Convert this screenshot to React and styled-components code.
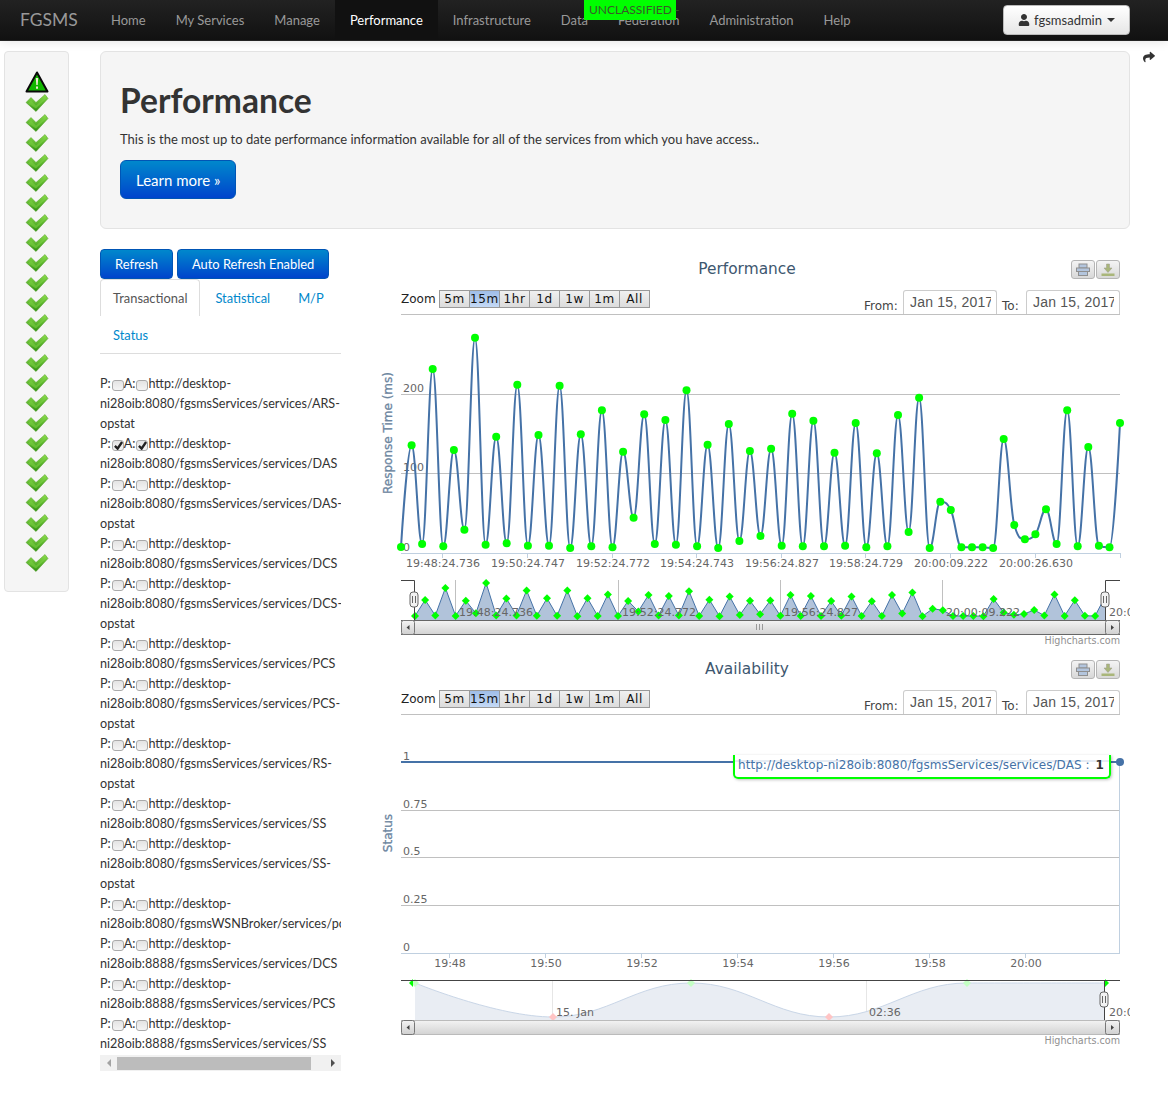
import React from "react";
import styled, { createGlobalStyle } from "styled-components";
import { FaUser, FaShare } from "react-icons/fa";

const GlobalStyle = createGlobalStyle`
  html, body {
    margin: 0;
    padding: 0;
    background: #fff;
  }
  body {
    font-family: Lato, "Noto Sans", sans-serif;
    font-size: 13px;
    line-height: 20px;
    color: #333;
  }
`;

const chartFont = `"DejaVu Sans", Verdana, sans-serif`;

const NAV = ["Home", "My Services", "Manage", "Performance", "Infrastructure", "Data", "Federation", "Administration", "Help"];

const mainY = [
  547, 445.3, 544, 369, 546.3, 450, 529.7, 337.7, 544.7, 436.7, 543.3, 384.7, 545.7, 435, 545.7, 385.7, 548, 434.3, 546.3, 410.3, 547.3, 451.7, 517.7, 414.3, 544, 420, 544.7, 390.3, 546.3, 444.7, 548, 424, 541, 451, 536, 448.7,
  545.7, 413.7, 546.3, 420.7, 546.3, 452.7, 545.7, 423, 547.3, 453.3, 546.3, 415, 532, 397.7, 548, 501.7, 510, 547.3, 547.3, 547.3, 548, 439, 525, 539.3, 534.3, 509.3, 544, 410.3, 546.3, 447, 545.7, 547.3, 423,
];

const services = [
  { url: "http://desktop-ni28oib:8080/fgsmsServices/services/ARS-opstat" },
  { url: "http://desktop-ni28oib:8080/fgsmsServices/services/DAS", on: true },
  { url: "http://desktop-ni28oib:8080/fgsmsServices/services/DAS-opstat" },
  { url: "http://desktop-ni28oib:8080/fgsmsServices/services/DCS" },
  { url: "http://desktop-ni28oib:8080/fgsmsServices/services/DCS-opstat" },
  { url: "http://desktop-ni28oib:8080/fgsmsServices/services/PCS" },
  { url: "http://desktop-ni28oib:8080/fgsmsServices/services/PCS-opstat" },
  { url: "http://desktop-ni28oib:8080/fgsmsServices/services/RS-opstat" },
  { url: "http://desktop-ni28oib:8080/fgsmsServices/services/SS" },
  { url: "http://desktop-ni28oib:8080/fgsmsServices/services/SS-opstat" },
  { url: "http://desktop-ni28oib:8080/fgsmsWSNBroker/services/policyPublisher" },
  { url: "http://desktop-ni28oib:8888/fgsmsServices/services/DCS" },
  { url: "http://desktop-ni28oib:8888/fgsmsServices/services/PCS" },
  { url: "http://desktop-ni28oib:8888/fgsmsServices/services/SS" },
];

// same control point maths as the highcharts spline series
const splinePath = (pts) => {
  let d = `M${pts[0][0]} ${pts[0][1]}`;
  const conts = pts.map(([x, y], i) => {
    if (i === 0 || i === pts.length - 1) return { l: [x, y], r: [x, y] };
    const [px, py] = pts[i - 1];
    const [nx, ny] = pts[i + 1];
    const lx = (1.5 * x + px) / 2.5;
    const rx = (1.5 * x + nx) / 2.5;
    let ly = (1.5 * y + py) / 2.5;
    let ry = (1.5 * y + ny) / 2.5;
    const fix = ((ry - ly) * (rx - x)) / (rx - lx) + y - ry;
    ly += fix;
    ry += fix;
    if (ly > py && ly > y) {
      ly = Math.max(py, y);
      ry = 2 * y - ly;
    } else if (ly < py && ly < y) {
      ly = Math.min(py, y);
      ry = 2 * y - ly;
    }
    if (ry > ny && ry > y) {
      ry = Math.max(ny, y);
      ly = 2 * y - ry;
    } else if (ry < ny && ry < y) {
      ry = Math.min(ny, y);
      ly = 2 * y - ry;
    }
    return { l: [lx, ly], r: [rx, ry] };
  });
  for (let i = 1; i < pts.length; i++) {
    const a = conts[i - 1].r;
    const b = conts[i].l;
    d += ` C${a[0].toFixed(1)} ${a[1].toFixed(1)} ${b[0].toFixed(1)} ${b[1].toFixed(1)} ${pts[i][0]} ${pts[i][1]}`;
  }
  return d;
};

const Page = styled.div`
  width: 1168px;
  height: 1097px;
  overflow: hidden;
  position: relative;
`;

const Navbar = styled.nav`
  height: 41px;
  box-sizing: border-box;
  padding: 0 38px 0 20px;
  display: flex;
  align-items: center;
  background: linear-gradient(#222222, #111111);
  border-bottom: 1px solid #252525;
  box-shadow: 0 1px 10px rgba(0, 0, 0, 0.1);
`;

const Brand = styled.a`
  font-size: 17.5px;
  color: #999;
  margin-right: 19px;
  width: 57px;
`;

const NavLink = styled.a`
  height: 40px;
  display: flex;
  align-items: center;
  padding: 0 15px;
  color: ${(p) => (p.$active ? "#fff" : "#999")};
  background: ${(p) => (p.$active ? "#111" : "transparent")};
`;

const UserButton = styled.button`
  margin-left: auto;
  width: 127px;
  height: 30px;
  display: flex;
  align-items: center;
  justify-content: center;
  gap: 4px;
  font: inherit;
  color: #333;
  background: linear-gradient(#ffffff, #e6e6e6);
  border: 1px solid #bbb;
  border-radius: 4px;
`;

const Caret = styled.span`
  width: 0;
  height: 0;
  margin-left: 1px;
  border-left: 4px solid transparent;
  border-right: 4px solid transparent;
  border-top: 4px solid #333;
`;

const Banner = styled.div`
  position: absolute;
  top: 0;
  left: 584px;
  width: 92px;
  height: 20px;
  box-sizing: border-box;
  padding-left: 5px;
  background: #00ff00;
  color: #3a5a2a;
  font-size: 12px;
  white-space: nowrap;
`;

const Shell = styled.div`
  display: grid;
  grid-template-columns: 65px 1030px 20px;
  column-gap: 31px;
  margin: 10px 0 0 4px;
  align-items: start;
`;

const Rail = styled.aside`
  height: 541px;
  box-sizing: border-box;
  padding-top: 19px;
  display: flex;
  flex-direction: column;
  align-items: center;
  background: #f5f5f5;
  border: 1px solid #e3e3e3;
  border-radius: 4px;
`;

const Share = styled.div`
  margin: 0 0 0 -18px;
  color: #333;
  font-size: 12px;
  height: 14px;
  line-height: 14px;
`;

const Hero = styled.header`
  height: 178px;
  box-sizing: border-box;
  padding: 28px 19px 0;
  background: #f5f5f5;
  border: 1px solid #e3e3e3;
  border-radius: 6px;
  h1 {
    margin: 0;
    font-size: 33.6px;
    line-height: 40px;
    font-weight: 700;
    color: #333;
  }
  p {
    margin: 9px 0 11px;
  }
`;

const BlueButton = styled.button`
  font-family: inherit;
  color: #fff;
  background: linear-gradient(#0088cc, #0044cc);
  border: 1px solid #0055b5;
  border-radius: ${(p) => (p.$large ? "6px" : "4px")};
  font-size: ${(p) => (p.$large ? "15px" : "12.9px")};
  height: ${(p) => (p.$large ? "39px" : "30px")};
  padding: 0 ${(p) => (p.$large ? "15px" : "14px")};
  white-space: nowrap;
`;

const Content = styled.div`
  display: grid;
  grid-template-columns: 241px 746px;
  column-gap: 33px;
  margin-top: 20px;
`;

const LeftCol = styled.div`
  width: 241px;
`;

const Buttons = styled.div`
  display: flex;
  gap: 4px;
`;

const Tabs = styled.ul`
  list-style: none;
  margin: 0 0 20px;
  padding: 0;
  display: flex;
  flex-wrap: wrap;
  row-gap: 0;
  border-bottom: 1px solid #ddd;
  font-size: 12.9px;
`;

const Tab = styled.li`
  height: 37px;
  box-sizing: border-box;
  margin-right: 2px;
  padding: 8px 12px;
  border: 1px solid ${(p) => (p.$active ? "#ddd" : "transparent")};
  border-bottom: 0;
  border-radius: 4px 4px 0 0;
  color: ${(p) => (p.$active ? "#555" : "#0088cc")};
`;

const ServiceList = styled.div`
  overflow: hidden;
  height: 680px;
`;

const ServiceRow = styled.div`
  width: 241px;
  font-size: 12.6px;
`;

const Box = styled.span`
  display: inline-block;
  overflow: hidden;
  width: 12px;
  height: 11px;
  box-sizing: border-box;
  vertical-align: -3px;
  border: 1px solid #aaa;
  border-radius: 3px;
  background: linear-gradient(#e4e4e4, #f4f4f4);
  margin-left: 1px;
  svg {
    display: block;
    margin: 0 0 0 1px;
  }
`;

const ScrollTrack = styled.div`
  height: 16px;
  margin-top: 1px;
  display: flex;
  align-items: center;
  background: #f1f1f1;
`;

const ScrollThumb = styled.div`
  width: 194px;
  height: 13px;
  margin: 0 auto 0 0;
  background: #bcbcbc;
`;

const ArrowCell = styled.div`
  width: 17px;
  flex: none;
  display: flex;
  justify-content: center;
`;

const Arrow = styled.span`
  width: 0;
  height: 0;
  border-top: 4px solid transparent;
  border-bottom: 4px solid transparent;
  ${(p) => (p.$left ? "border-right: 4px solid #a3a3a3;" : "border-left: 4px solid #505050;")}
`;

const ChartBlock = styled.section`
  width: 746px;
  height: 400px;
  display: flex;
  flex-direction: column;
  font-family: ${chartFont};
`;

const TitleRow = styled.div`
  height: 31px;
  flex: none;
  display: grid;
  grid-template-columns: 1fr auto 1fr;
  align-items: start;
`;

const ChartTitle = styled.div`
  grid-column: 2;
  margin-top: 11px;
  font-size: 15.4px;
  line-height: 18px;
  color: #3e576f;
`;

const ExportButtons = styled.div`
  grid-column: 3;
  justify-self: end;
  display: flex;
  gap: 1px;
  margin-top: 11px;
`;

const ExportButton = styled.div`
  width: 24px;
  height: 19px;
  display: flex;
  align-items: center;
  justify-content: center;
  box-sizing: border-box;
  border: 1px solid #b5b5b5;
  border-radius: 3px;
  background: linear-gradient(#f4f4f4, #d8d8d8);
`;

const RangeRow = styled.div`
  height: 24px;
  flex: none;
  margin-top: 10px;
  padding-left: 27px;
  display: flex;
  align-items: flex-start;
  font-size: 12px;
`;

const ZoomLabel = styled.span`
  color: #222;
  line-height: 18px;
  width: 38px;
`;

const RangeButtons = styled.div`
  display: flex;
  width: 211px;
  box-sizing: border-box;
  border: 1px solid #999;
  height: 18px;
`;

const RangeButton = styled.div`
  flex: 1;
  box-sizing: border-box;
  text-align: center;
  line-height: 16px;
  color: #111;
  letter-spacing: 0.6px;
  background: ${(p) => (p.$active ? "linear-gradient(#9fbde8, #c4d9f5)" : "linear-gradient(#f0f0f0, #dcdcdc)")};
  & + & {
    border-left: 1px solid #999;
  }
`;

const DateLabel = styled.span`
  margin-left: ${(p) => p.$gap}px;
  align-self: flex-end;
  margin-bottom: 1px;
  color: #444;
  line-height: 14px;
  width: ${(p) => p.$w}px;
`;

const DateField = styled.div`
  width: 94px;
  height: 24px;
  box-sizing: border-box;
  padding: 0 0 0 6px;
  border: 1px solid #ccc;
  border-bottom: 0;
  border-radius: 3px 3px 0 0;
  font-family: "Liberation Sans", Arial, sans-serif;
  font-size: 14px;
  line-height: 23px;
  letter-spacing: 0.2px;
  color: #555;
`;

const DateText = styled.div`
  width: 81px;
  overflow: hidden;
  white-space: nowrap;
`;

const Plot = styled.svg`
  display: block;
  flex: none;
  width: 756px;
  height: 336px;
  font-family: ${chartFont};
  font-size: 11px;
  text {
    fill: #666;
  }
`;

const CheckIcon = () => (
  <svg width="24" height="20" viewBox="0 -0.5 24 20">
    <path d="M1 9 L6 4 L11 9 L20 1 L23 5 L11 18 Z" fill="url(#okFill)" stroke="#4f9a1f" strokeWidth="0.5" />
    <path d="M3 10 L6 7 L11 12 L20 4 L21 5 L11 15 Z" fill="#7fd345" opacity="0.5" />
  </svg>
);

const WarnIcon = () => (
  <svg width="24" height="22" viewBox="0 0 24 22">
    <path d="M12 1.5 L22.5 20.5 L1.5 20.5 Z" fill="#12b800" stroke="#0a0a0a" strokeWidth="2" strokeLinejoin="round" />
    <path d="M10.8 7 H13.2 L12.7 14 H11.3 Z M11 15.4 H13 V17.8 H11 Z" fill="#f3e9d6" />
  </svg>
);

const PrintIcon = () => (
  <svg width="16" height="14" viewBox="0 0 16 14">
    <rect x="4" y="1" width="8" height="4" fill="#b3c5dd" stroke="#8f8f8f" />
    <rect x="1.5" y="5" width="13" height="3.5" fill="#b3c5dd" stroke="#8f8f8f" />
    <rect x="3.5" y="8.5" width="9" height="4" fill="#b3c5dd" stroke="#8f8f8f" />
  </svg>
);

const SaveIcon = () => (
  <svg width="16" height="14" viewBox="0 0 16 14">
    <path d="M6.5 1 H9.5 V5 H12 L8 9.5 L4 5 H6.5 Z" fill="#a9b67a" stroke="#9a9a88" strokeWidth="0.5" />
    <rect x="1.5" y="10.5" width="13" height="2.5" fill="#a9b67a" />
  </svg>
);

const Tick = () => (
  <svg width="9" height="9" viewBox="0 0 10 10">
    <path d="M1 5.5 L4 8.5 L9 1" fill="none" stroke="#222" strokeWidth="2.6" />
  </svg>
);

const Handle = ({ x, y }) => (
  <g>
    <rect x={x - 4} y={y} width="8" height="15" rx="3" fill="#f2f2f2" stroke="#666" />
    <path d={`M${x - 1.5} ${y + 4}V${y + 11}M${x + 1.5} ${y + 4}V${y + 11}`} stroke="#666" />
  </g>
);

const Scrollbar = ({ y, dark }) => {
  const edge = dark ? "#666" : "#bbb";
  return (
    <g>
      <rect x="401" y={y} width="719" height="14" fill="url(#barFill)" />
      <path d={`M401 ${y + 0.5}H1120M401 ${y + 14.5}H1120`} stroke={edge} />
      <rect x="401.5" y={y + 0.5} width="13" height="14" rx="2" fill="url(#btnFill)" stroke="#777" />
      <rect x="1105.5" y={y + 0.5} width="14" height="14" rx="2" fill="url(#btnFill)" stroke="#777" />
      <path d={`M409.5 ${y + 5}l-3 2.5l3 2.5zM1111 ${y + 5}l3 2.5l-3 2.5z`} fill="#444" />
      {dark && <path d={`M756.5 ${y + 4}v6M759.5 ${y + 4}v6M762.5 ${y + 4}v6`} stroke="#999" />}
    </g>
  );
};

const YAxisTitle = ({ y, children }) => (
  <text x="388" y={y} transform={`rotate(-90 388 ${y})`} textAnchor="middle" dominantBaseline="central" fontSize="12" stroke="#6d869f" strokeWidth="0.3" style={{ fill: "#6d869f" }}>
    {children}
  </text>
);

const Credit = ({ y }) => (
  <text x="1120" y={y} textAnchor="end" fontSize="9.6" style={{ fill: "#909090" }}>
    Highcharts.com
  </text>
);

const PerformancePlot = () => {
  const pts = mainY.map((y, i) => [+(401 + i * 10.574).toFixed(1), y]);
  const nav = mainY.map((y, i) => [+(415 + i * 10.15).toFixed(1), +(616 - (547 - y) * 0.158).toFixed(1)]);
  const navLine = nav.map(([x, y]) => `${x} ${y}`).join(" L");
  const ticks = [442, 527, 612, 696, 781, 865, 950, 1035];
  const labels = ["19:48:24.736", "19:50:24.747", "19:52:24.772", "19:54:24.743", "19:56:24.827", "19:58:24.729", "20:00:09.222", "20:00:26.630"];
  const navTicks = [
    [455, "19:48:24.736"],
    [618, "19:52:24.772"],
    [780, "19:56:24.827"],
    [942, "20:00:09.222"],
  ];
  return (
    <Plot viewBox="374 314 756 336">
      <defs>
        <linearGradient id="barFill" x1="0" y1="0" x2="0" y2="1">
          <stop offset="0" stopColor="#f4f4f4" />
          <stop offset="1" stopColor="#d4d4d4" />
        </linearGradient>
        <linearGradient id="btnFill" x1="0" y1="0" x2="0" y2="1">
          <stop offset="0" stopColor="#f4f4f4" />
          <stop offset="1" stopColor="#cfcfcf" />
        </linearGradient>
      </defs>
      <path d="M401 314.5H1120M401 394.5H1120M401 473.5H1120" stroke="#c0c0c0" />
      <path d="M401 553.5H1120" stroke="#c0d0e0" />
      {[...ticks, 1120].map((x) => (
        <path key={x} d={`M${x}.5 553V558`} stroke="#c0d0e0" />
      ))}
      <text x="403" y="392">200</text>
      <text x="403" y="471">100</text>
      <text x="403" y="551">0</text>
      <YAxisTitle y={433}>Response Time (ms)</YAxisTitle>
      <path d={splinePath(pts)} fill="none" stroke="#4572a7" strokeWidth="2" />
      {pts.map(([x, y]) => (
        <circle key={x} cx={x} cy={y} r="4" fill="#00ff00" />
      ))}
      {ticks.map((x, i) => (
        <text key={x} x={x + 1} y="567" textAnchor="middle">{labels[i]}</text>
      ))}

      {navTicks.map(([x]) => (
        <path key={x} d={`M${x}.5 580V620`} stroke="#c0c0c0" />
      ))}
      <path d={`M${nav[0][0]} 620 L${navLine} L${nav[nav.length - 1][0]} 620 Z`} fill="#b1c3da" />
      <path d={`M${navLine}`} fill="none" stroke="#4572a7" />
      {nav.map(([x, y]) => (
        <path key={x} d={`M${x} ${y - 4}l4 4l-4 4l-4 -4z`} fill="#00ff00" />
      ))}
      {navTicks.map(([x, t]) => (
        <text key={x} x={x + 4} y="616">{t}</text>
      ))}
      <text x="1109" y="616">20:00:26.630</text>
      <path d="M401 580.5H414.5V620M1105.5 620V580.5H1120" fill="none" stroke="#444" />
      <Handle x={414} y={592} />
      <Handle x={1105} y={592} />
      <Scrollbar y={620} dark />
      <Credit y={644} />
    </Plot>
  );
};

const AvailabilityPlot = () => {
  const area = [[415, 983], [553, 1017], [691, 983], [829, 1017], [967, 983], [1105, 983]];
  const curve = splinePath(area);
  return (
    <Plot viewBox="374 714 756 336">
      <path d="M401 714.5H1120M401 810.5H1120M401 857.5H1120M401 905.5H1120" stroke="#c0c0c0" />
      <path d="M401 953.5H1120M1119.5 762V953" stroke="#c0d0e0" fill="none" />
      {[449, 545, 641, 737, 833, 929, 1025].map((x, i) => (
        <g key={x}>
          <path d={`M${x}.5 953V958`} stroke="#c0d0e0" />
          <text x={x + 1} y="967" textAnchor="middle">{["19:48", "19:50", "19:52", "19:54", "19:56", "19:58", "20:00"][i]}</text>
        </g>
      ))}
      <text x="403" y="760">1</text>
      <text x="403" y="808">0.75</text>
      <text x="403" y="855">0.5</text>
      <text x="403" y="903">0.25</text>
      <text x="403" y="951">0</text>
      <YAxisTitle y={833}>Status</YAxisTitle>
      <path d="M401 762H1120" stroke="#4572a7" strokeWidth="2" />
      <circle cx="1120" cy="762" r="4" fill="#4572a7" />

      <path d="M552.5 980V1020M866.5 980V1020" stroke="#e6e6e6" />
      <path d={`${curve} L1105 1020 L415 1020 Z`} fill="#e9edf3" />
      <path d={curve} fill="none" stroke="#c9d6e7" />
      {area.slice(0, 5).map(([x, y]) => (
        <path key={x} d={`M${x} ${y - 4}l4 4l-4 4l-4 -4z`} fill={y > 1000 ? "#ffc4c4" : "#c4ffc4"} />
      ))}
      <path d="M413 979l-4 4l4 4z" fill="#00ff00" />
      <path d="M1105 979l4 4l-4 4z" fill="#00ff00" />
      <text x="556" y="1016">15. Jan</text>
      <text x="869" y="1016">02:36</text>
      <text x="1109" y="1016">20:00</text>
      <path d="M401 980.5H1120M1104.5 980V1020" fill="none" stroke="#444" />
      <Handle x={1104} y={992} />
      <Scrollbar y={1020} />
      <Credit y={1044} />
    </Plot>
  );
};

const TooltipBox = styled.div`
  position: absolute;
  left: 733px;
  top: 755px;
  width: 378px;
  height: 24px;
  box-sizing: border-box;
  padding: 1px 0 0 3px;
  background: linear-gradient(#fff 0 5px, #e6ecf4 5px 7px, #fff 7px);
  border: 2px solid #00ff00;
  border-top: 0;
  border-radius: 0 0 5px 5px;
  box-shadow: 1px 1px 3px rgba(0, 0, 0, 0.25);
  font-family: ${chartFont};
  font-size: 12px;
  line-height: 18px;
  letter-spacing: 0.05px;
  white-space: nowrap;
  color: #4572a7;
  b {
    color: #333;
    margin-left: 6px;
  }
`;

const Chart = ({ title, children }) => (
  <ChartBlock>
    <TitleRow>
      <ChartTitle>{title}</ChartTitle>
      <ExportButtons>
        <ExportButton><PrintIcon /></ExportButton>
        <ExportButton><SaveIcon /></ExportButton>
      </ExportButtons>
    </TitleRow>
    <RangeRow>
      <ZoomLabel>Zoom</ZoomLabel>
      <RangeButtons>
        {["5m", "15m", "1hr", "1d", "1w", "1m", "All"].map((r) => (
          <RangeButton key={r} $active={r === "15m"}>{r}</RangeButton>
        ))}
      </RangeButtons>
      <DateLabel $gap={214} $w={39}>From:</DateLabel>
      <DateField><DateText>Jan 15, 2017</DateText></DateField>
      <DateLabel $gap={5} $w={24}>To:</DateLabel>
      <DateField><DateText>Jan 15, 2017</DateText></DateField>
    </RangeRow>
    {children}
  </ChartBlock>
);

export default function App() {
  return (
    <Page>
      <GlobalStyle />
      <svg width="0" height="0" style={{ position: "absolute" }}>
        <defs>
          <linearGradient id="okFill" x1="0" y1="0" x2="0" y2="1">
            <stop offset="0" stopColor="#8ee04e" />
            <stop offset="1" stopColor="#2f8f12" />
          </linearGradient>
        </defs>
      </svg>
      <Navbar>
        <Brand>FGSMS</Brand>
        {NAV.map((n) => (
          <NavLink key={n} $active={n === "Performance"}>{n}</NavLink>
        ))}
        <UserButton>
          <FaUser size={12} />
          fgsmsadmin
          <Caret />
        </UserButton>
      </Navbar>
      <Banner>UNCLASSIFIED -</Banner>
      <Shell>
        <Rail>
          <WarnIcon />
          {Array.from({ length: 24 }, (_, i) => (
            <CheckIcon key={i} />
          ))}
        </Rail>
        <main>
          <Hero>
            <h1>Performance</h1>
            <p>This is the most up to date performance information available for all of the services from which you have access..</p>
            <BlueButton $large>Learn more »</BlueButton>
          </Hero>
          <Content>
            <LeftCol>
              <Buttons>
                <BlueButton>Refresh</BlueButton>
                <BlueButton>Auto Refresh Enabled</BlueButton>
              </Buttons>
              <Tabs>
                <Tab $active>Transactional</Tab>
                <Tab>Statistical</Tab>
                <Tab>M/P</Tab>
                <Tab>Status</Tab>
              </Tabs>
              <ServiceList>
                {services.map((s) => (
                  <ServiceRow key={s.url}>
                    P:<Box>{s.on && <Tick />}</Box>A:<Box>{s.on && <Tick />}</Box>{s.url}
                  </ServiceRow>
                ))}
              </ServiceList>
              <ScrollTrack>
                <ArrowCell><Arrow $left /></ArrowCell>
                <ScrollThumb />
                <ArrowCell><Arrow /></ArrowCell>
              </ScrollTrack>
            </LeftCol>
            <div>
              <Chart title="Performance"><PerformancePlot /></Chart>
              <Chart title="Availability"><AvailabilityPlot /></Chart>
            </div>
          </Content>
        </main>
        <Share><FaShare /></Share>
      </Shell>
      <TooltipBox>
        http://desktop-ni28oib:8080/fgsmsServices/services/DAS :<b>1</b>
      </TooltipBox>
    </Page>
  );
}
